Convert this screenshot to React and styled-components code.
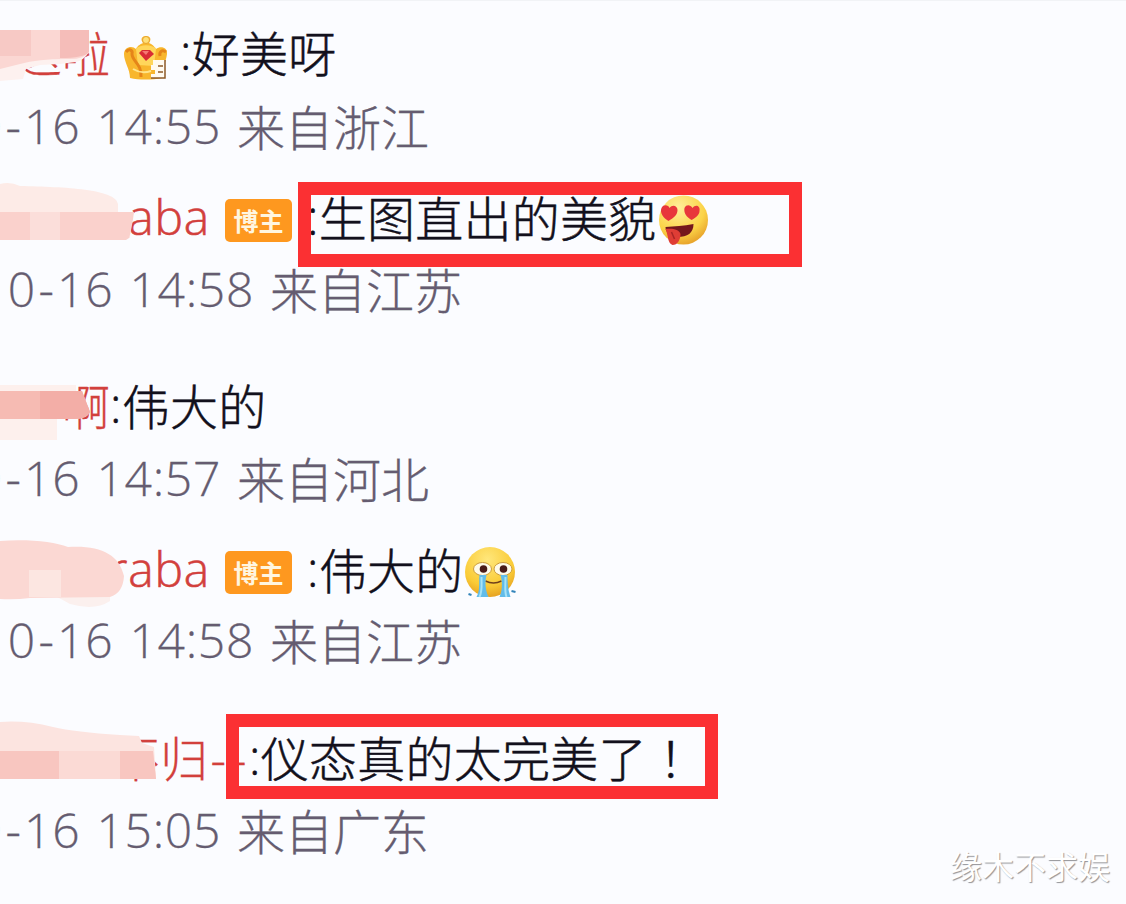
import React from "react";
import styled, { createGlobalStyle } from 'styled-components'

const GlobalStyle = createGlobalStyle`
    body {
        margin: 0;
        background: #fbfcff;
    }
`

const Page = styled.main`
    position: relative;
    box-sizing: border-box;
    width: 1126px;
    height: 904px;
    padding-top: 21px;
    overflow: hidden;
    background: #fbfcff;
    border-top: 1px solid #f1f3f6;
    font-family: "Open Sans", "Noto Sans CJK SC", sans-serif;
    font-size: 48px;
    font-weight: 300;
    line-height: 64px;
    white-space: pre;
`

const Comment = styled.article`
    position: relative;
    height: 138px;
    margin-bottom: ${props => props.$gap || 0}px;
`

const Line = styled.div`
    display: flex;
    align-items: center;
    height: 64px;
`

const Name = styled.span`
    display: flex;
    justify-content: flex-end;
    flex: none;
    width: ${props => props.$width}px;
    color: #d2403c;
    -webkit-text-stroke: .3px #d2403c;
`

const LatinName = styled(Name)`
    padding-bottom: 4px;
    letter-spacing: .8px;
    -webkit-text-stroke: .6px #d2403c;
`

const Message = styled.span`
    margin-left: ${props => props.$left || 0}px;
    color: #12101c;
    letter-spacing: .25px;
    -webkit-text-stroke: .5px #12101c;
`

const Colon = styled.span`
    vertical-align: 2px;
    line-height: 1;
`

const Bang = styled.span`
    font-family: "Noto Sans CJK TC", sans-serif;
    line-height: 1;
`

const Meta = styled(Line)`
    margin-top: ${props => props.$top}px;
    color: #655c70;
    -webkit-text-stroke: .3px #655c70;
`

const Stamp = styled.span`
    display: flex;
    justify-content: flex-end;
    flex: none;
    width: ${props => props.$width}px;
    margin-right: 16px;
    padding-bottom: 4px;
    letter-spacing: .7px;
    word-spacing: 3px;
`

const Dash = styled.span`
    padding: 0 2.5px;
`

const Badge = styled.span`
    display: flex;
    align-items: center;
    justify-content: center;
    width: 67px;
    height: 43px;
    margin: 2px 0 0 15px;
    border-radius: 5px;
    background: #fe981f;
    color: #fff6e0;
    font-family: "Noto Sans CJK SC", sans-serif;
    font-size: 25px;
    font-weight: 700;
    line-height: 40px;
`

const Crown = styled.svg`
    width: 46px;
    height: 46px;
    margin: 7px 0 0 13px;
`

const Face = styled.svg`
    flex: none;
    width: 53px;
    height: 54px;
    margin: 4px 0 0 1px;
`

const Smudge = styled.svg`
    position: absolute;
    left: 0;
    top: ${props => props.$top}px;
    width: 170px;
    height: 80px;
`

const Highlight = styled.div`
    position: absolute;
    box-sizing: border-box;
    left: ${props => props.$left}px;
    top: ${props => props.$top}px;
    width: ${props => props.$width}px;
    height: 85px;
    border: 13px solid #fb3033;
`

const Watermark = styled.div`
    position: absolute;
    right: 16px;
    bottom: 15px;
    color: #fff;
    font-family: "Noto Sans CJK SC", sans-serif;
    font-size: 32px;
    font-weight: 400;
    line-height: 48px;
    text-shadow: 1px 1px 1px #939397;
`

const Time = ({ top, width, time, place }) => (
    <Meta $top={top}>
        <Stamp $width={width}>10<Dash>-</Dash>16 {time}</Stamp>
        <span>来自{place}</span>
    </Meta>
)

const CrownIcon = () => (
    <Crown viewBox="0 0 46 46">
        <path d="M7 43 C7 34 1 27 1 19 C1 12 9 10 13 14 C15 10 18 9 20 8 C17 4 19 1 23 1 C27 1 29 4 26 8 C29 9 31 11 33 14 C38 10 45 13 44 19 C43 27 39 33 39 43 C29 45 16 45 7 43Z" fill="#f8b62d" />
        <path d="M13 14 C17 9 29 9 33 14 L31 31 L15 30Z" fill="#ffd65b" />
        <circle cx="23" cy="5" r="3.5" fill="#ffe078" stroke="#e7a42e" />
        <path d="M3 17 C6 13 10 15 9 19 C9 26 19 29 18 42 M43 17 C39 14 36 17 37 21" fill="none" stroke="#e58519" strokeWidth="3" />
        <path d="M16 18 L19 15 H27 L31 19 L23 26Z" fill="#d92c35" />
        <path d="M19 16 H26 L23 20Z" fill="#f57972" />
        <path d="M10 34 C18 39 25 37 28 36" fill="none" stroke="#ffe48b" strokeWidth="2" />
        <path d="M30 25 H42 V43 H28 V39 H32 V35 H28 V30 H30Z" fill="#fffaf0" />
        <path d="M42 25 V43 H28 M35 31 H40 M35 37 H40" fill="none" stroke="#8d5a28" strokeWidth="1.5" />
    </Crown>
)

const LoveFace = () => (
    <Face viewBox="0 0 52 54">
        <defs>
            <radialGradient id="love" cx=".4" cy=".25" r=".75">
                <stop offset="0" stopColor="#ffee9b" />
                <stop offset=".7" stopColor="#fbd347" />
                <stop offset="1" stopColor="#e9a62d" />
            </radialGradient>
        </defs>
        <circle cx="26" cy="26" r="24.5" fill="url(#love)" />
        <path d="M11 27 C6 24 2 19 4 14 C6 10 11 11 12 14 C15 10 20 12 20 16 C20 21 16 24 11 27Z M34 26 C29 23 26 19 27 14 C29 10 33 11 35 14 C38 10 43 12 42 17 C42 21 38 24 34 26Z" fill="#e8363b" />
        <path d="M8 33 C17 32 26 32 36 30 C36 39 30 43 20 43 C13 43 8 39 8 33Z" fill="#74171c" />
        <path d="M8 35 C14 34 22 35 23 40 C23 46 20 51 15 51 C10 49 11 42 8 35Z" fill="#df3d35" />
        <path d="M14 38 L17 45" stroke="#aa2525" strokeWidth="1.5" />
    </Face>
)

const CryFace = () => (
    <Face viewBox="0 0 52 54">
        <defs>
            <radialGradient id="cry" cx=".45" cy=".25" r=".75">
                <stop offset="0" stopColor="#ffe77c" />
                <stop offset=".7" stopColor="#facb36" />
                <stop offset="1" stopColor="#e6a323" />
            </radialGradient>
        </defs>
        <circle cx="25.500" cy="26" r="25" fill="url(#cry)" />
        <ellipse cx="18" cy="23" rx="9" ry="6.5" fill="#fffbea" stroke="#cc9c3d" />
        <ellipse cx="38.500" cy="23" rx="9" ry="6.500" fill="#fffbea" stroke="#cc9c3d" />
        <circle cx="19" cy="23" r="3.800" fill="#491b18" />
        <circle cx="39" cy="23" r="3.800" fill="#491b18" />
        <path d="M21 35 Q29 39 37 35" fill="none" stroke="#70401c" strokeWidth="1.5" />
        <path d="M15 29 H22 C20 37 21 44 24 51 H12 C16 44 14 36 15 29Z M36 29 H43 C43 39 44 45 46 51 H35 C38 44 38 36 36 29Z" fill="#62bce9" />
        <path d="M17 31 C17 40 18 45 15 51 M41 31 C41 41 40 46 42 51" fill="none" stroke="#a7e3f7" strokeWidth="2" />
        <path d="M4 48 L7 49 M47 45 L51 46" stroke="#3284ba" strokeWidth="2" />
    </Face>
)

const App = () => {
    return (
        <Page>
            <GlobalStyle />
            <Comment $gap={27}>
                <Line>
                    <Name $width={110}>这啦</Name>
                    <CrownIcon />
                    <Message $left={11}><Colon>:</Colon>好美呀</Message>
                </Line>
                <Time top={10} width={221} time="14:55" place="浙江" />
                <Smudge $top={1} viewBox="0 0 170 80">
                    <path d="M0 7 H89 V29 Q84 37 76 39 Q58 42 40 42 L26 46 L23 56 L0 58Z" fill="#fdf1ef" />
                    <path d="M0 7 H89 V29 Q84 37 66 36 Q38 36 20 41 L0 46Z" fill="#fbd7d3" />
                    <path d="M60 7 H89 V29 Q84 35 60 35Z" fill="#f5bdb9" />
                    <path d="M0 7 H31 V33 H0Z" fill="#f7c9c5" />
                </Smudge>
            </Comment>

            <Comment $gap={50}>
                <Line>
                    <LatinName $width={210}>araba</LatinName>
                    <Badge>博主</Badge>
                    <Message $left={15}><Colon>:</Colon>生图直出的美貌</Message>
                    <LoveFace />
                </Line>
                <Time top={8} width={254} time="14:58" place="江苏" />
                <Smudge $top={-6} viewBox="0 0 170 80">
                    <path d="M112 20 H131 V32 H112Z" fill="#fbfcff" />
                    <path d="M0 3 Q10 0 20 5 C65 6 116 8 118 23 V32 H132 L130 57 H0Z" fill="#fdebe7" />
                    <path d="M0 31 H134 Q132 47 129 57 L126 59 H0Z" fill="#fad1cc" />
                    <path d="M30 31 H60 V59 H30Z" fill="#fbdeda" />
                </Smudge>
            </Comment>

            <Comment $gap={26}>
                <Line>
                    <Name $width={110}>啊</Name>
                    <Message><Colon>:</Colon>伟大的</Message>
                </Line>
                <Time top={9} width={221} time="14:57" place="河北" />
                <Smudge $top={10} viewBox="0 0 170 80">
                    <path d="M0 0 H76 V6 H0Z M0 34 H57 V55 H0Z" fill="#fdf0ed" />
                    <path d="M0 6 H82 L90 27 Q87 34 75 34 H0Z" fill="#f6bbb3" />
                    <path d="M40 6 H82 L90 27 Q87 34 75 34 H40Z" fill="#f3aea7" />
                </Smudge>
            </Comment>

            <Comment $gap={50}>
                <Line>
                    <LatinName $width={210}>araba</LatinName>
                    <Badge>博主</Badge>
                    <Message $left={15}><Colon>:</Colon>伟大的</Message>
                    <CryFace />
                </Line>
                <Time top={7} width={254} time="14:58" place="江苏" />
                <Smudge $top={0} viewBox="0 0 170 80">
                    <path d="M70 65 Q95 72 110 62 L110 54 H50Z" fill="#fbf0ee" />
                    <path d="M0 2 C30 0 54 3 68 8 C100 6 119 15 124 37 Q123 54 110 58 L30 59 Q15 61 0 60Z" fill="#fbd8d3" />
                    <path d="M29 31 H61 V58 H29Z" fill="#fce6e1" />
                </Smudge>
            </Comment>

            <Comment>
                <Line>
                    <Name $width={249}>不归<Dash>-</Dash><Dash>-</Dash></Name>
                    <Message><Colon>:</Colon>仪态真的太完美了<Bang lang="zh-Hant">！</Bang></Message>
                </Line>
                <Time top={9} width={221} time="15:05" place="广东" />
                <Smudge $top={-7} viewBox="0 0 170 80">
                    <path d="M0 2 Q25 0 53 7 Q75 12 120 15 L139 16 L142 23 L154 27 L156 59 H0Z" fill="#fce4e0" />
                    <path d="M0 31 H153 L156 59 H0Z" fill="#fbdad5" />
                    <path d="M0 31 H59 V59 H0Z M120 31 H153 L156 59 H120Z" fill="#f8c6c0" />
                </Smudge>
            </Comment>

            <Highlight $left={298} $top={181} $width={504} />
            <Highlight $left={226} $top={713} $width={492} />
            <Watermark>缘木不求娱</Watermark>
        </Page>
    );
};
export default App;
